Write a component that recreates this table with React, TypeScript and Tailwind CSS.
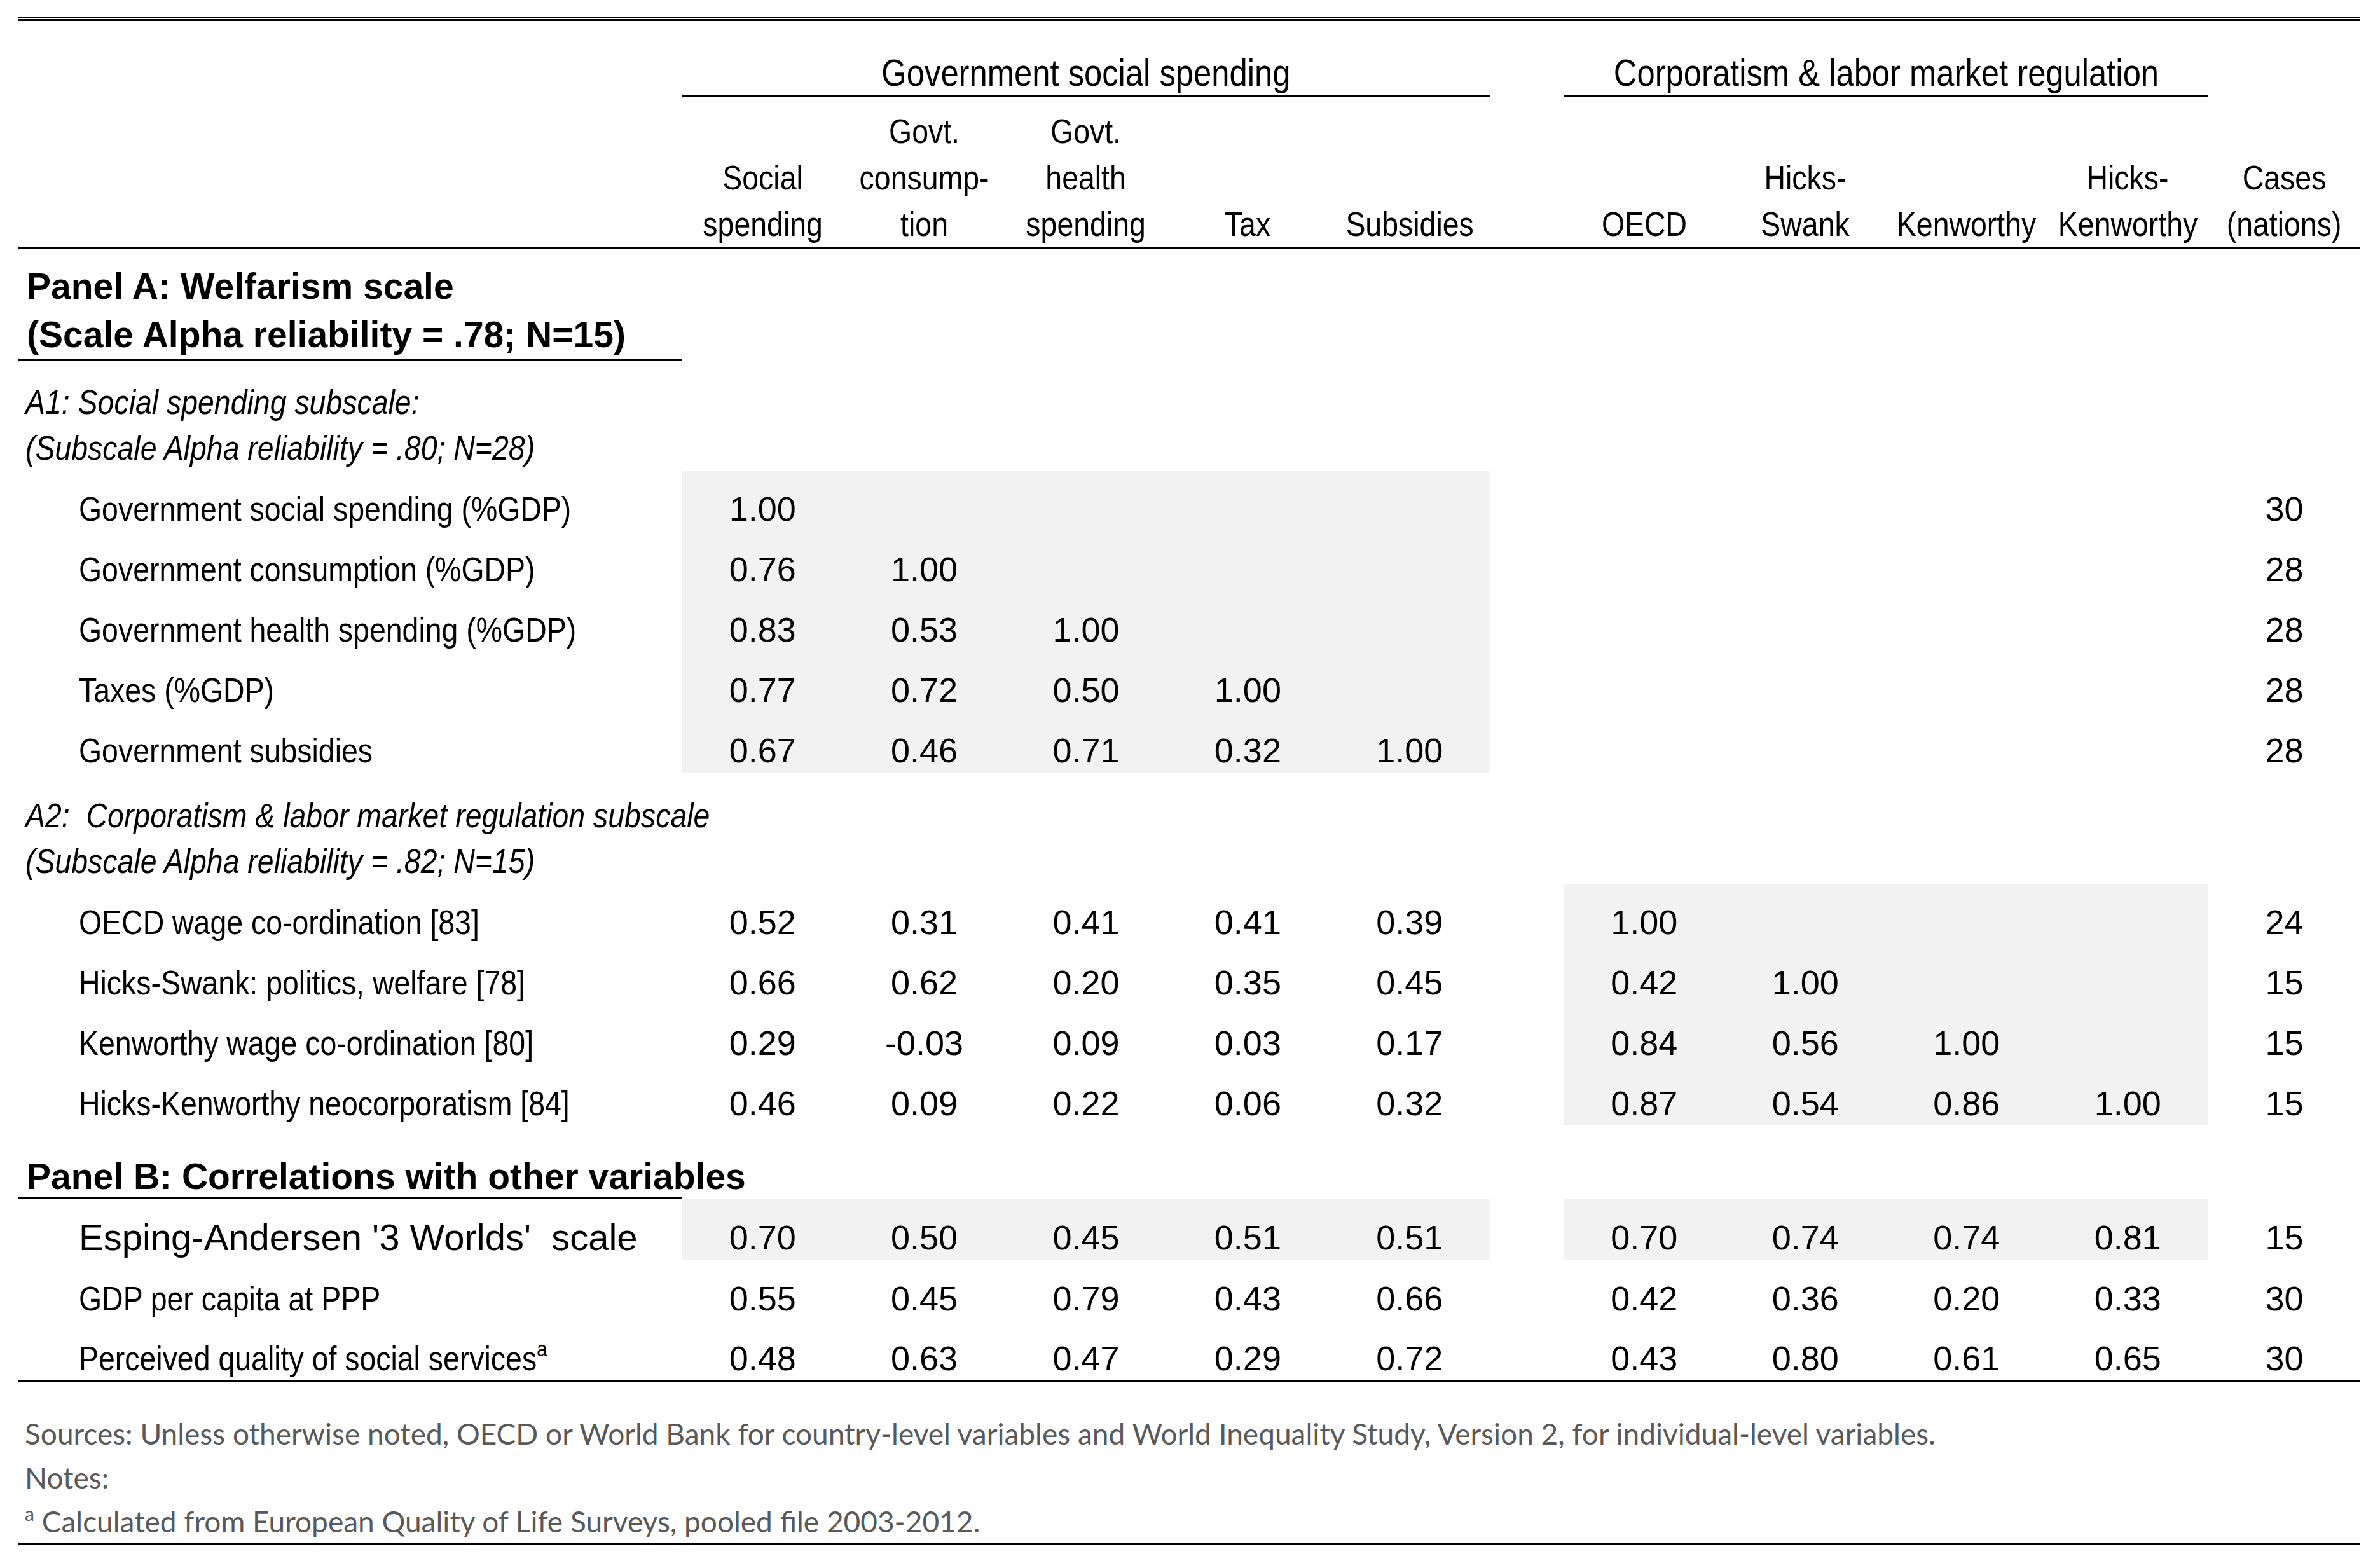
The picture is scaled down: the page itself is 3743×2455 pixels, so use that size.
import React from "react";

// 12 columns: label | 5 spending | gap | 4 corporatism | cases
const GRID =
  "grid grid-cols-[1044px_repeat(5,254.4px)_115px_repeat(4,253.5px)_239px]";

const SHADE = "bg-[#f2f2f2]";

type Row = {
  label: React.ReactNode;
  gov: string[];
  corp: string[];
  n: string;
  shadeGov?: boolean;
  shadeCorp?: boolean;
  big?: boolean;
};

const Narrow = ({
  children,
  className = "",
}: {
  children: React.ReactNode;
  className?: string;
}) => (
  <span className={`inline-block whitespace-pre scale-x-[0.86] ${className}`}>
    {children}
  </span>
);

const blank4 = ["", "", "", ""];

const a1: Row[] = [
  { label: "Government social spending (%GDP)", gov: ["1.00", "", "", "", ""], corp: blank4, n: "30", shadeGov: true },
  { label: "Government consumption (%GDP)", gov: ["0.76", "1.00", "", "", ""], corp: blank4, n: "28", shadeGov: true },
  { label: "Government health spending (%GDP)", gov: ["0.83", "0.53", "1.00", "", ""], corp: blank4, n: "28", shadeGov: true },
  { label: "Taxes (%GDP)", gov: ["0.77", "0.72", "0.50", "1.00", ""], corp: blank4, n: "28", shadeGov: true },
  { label: "Government subsidies", gov: ["0.67", "0.46", "0.71", "0.32", "1.00"], corp: blank4, n: "28", shadeGov: true },
];

const a2: Row[] = [
  { label: "OECD wage co-ordination [83]", gov: ["0.52", "0.31", "0.41", "0.41", "0.39"], corp: ["1.00", "", "", ""], n: "24", shadeCorp: true },
  { label: "Hicks-Swank: politics, welfare [78]", gov: ["0.66", "0.62", "0.20", "0.35", "0.45"], corp: ["0.42", "1.00", "", ""], n: "15", shadeCorp: true },
  { label: "Kenworthy wage co-ordination [80]", gov: ["0.29", "-0.03", "0.09", "0.03", "0.17"], corp: ["0.84", "0.56", "1.00", ""], n: "15", shadeCorp: true },
  { label: "Hicks-Kenworthy neocorporatism [84]", gov: ["0.46", "0.09", "0.22", "0.06", "0.32"], corp: ["0.87", "0.54", "0.86", "1.00"], n: "15", shadeCorp: true },
];

const DataRow = ({ row, h = "h-[95px]", last = false }: { row: Row; h?: string; last?: boolean }) => (
  <div className={`${GRID} ${h} ${last ? "border-b-[3px] border-black" : ""}`}>
    <div className="flex items-center pt-[24px] pl-[96px] whitespace-nowrap">
      {row.big ? (
        <span className="whitespace-pre text-[58px]">{row.label}</span>
      ) : (
        <Narrow className="origin-left">{row.label}</Narrow>
      )}
    </div>
    {row.gov.map((v, i) => (
      <div
        key={"g" + i}
        className={`flex items-center justify-center pt-[24px] ${row.shadeGov ? SHADE : ""}`}
      >
        {v}
      </div>
    ))}
    <div />
    {row.corp.map((v, i) => (
      <div
        key={"c" + i}
        className={`flex items-center justify-center pt-[24px] ${row.shadeCorp ? SHADE : ""}`}
      >
        {v}
      </div>
    ))}
    <div className="flex items-center justify-center pt-[24px]">{row.n}</div>
  </div>
);

const HeadCell = ({ lines }: { lines: string[] }) => (
  <div className="flex flex-col items-center justify-end">
    {lines.map((l) => (
      <div key={l} className="leading-[73px]">
        <Narrow className="origin-center">{l}</Narrow>
      </div>
    ))}
  </div>
);

export default function App() {
  return (
    <div className="w-[3743px] h-[2455px] bg-white text-black font-['Liberation_Sans',Arial,sans-serif] text-[54px] leading-none">
      <div className="ml-[28px] w-[3684px] pt-[26px]">
        {/* top double rule */}
        <div className="h-[2px] bg-black" />
        <div className="mt-[2px] h-[3px] bg-black" />

        {/* group headers */}
        <div className={GRID}>
          <div />
          <div className="col-span-5 h-[120px] border-b-[3px] border-black flex items-end justify-center">
            <div className="leading-[70px] text-[59px]">
              <Narrow className="origin-center">Government social spending</Narrow>
            </div>
          </div>
          <div />
          <div className="col-span-4 h-[120px] border-b-[3px] border-black flex items-end justify-center">
            <div className="leading-[70px] text-[59px]">
              <Narrow className="origin-center">Corporatism &amp; labor market regulation</Narrow>
            </div>
          </div>
          <div />
        </div>

        {/* column headers */}
        <div className={`${GRID} h-[239px] border-b-[3px] border-black`}>
          <div />
          <HeadCell lines={["Social", "spending"]} />
          <HeadCell lines={["Govt.", "consump-", "tion"]} />
          <HeadCell lines={["Govt.", "health", "spending"]} />
          <HeadCell lines={["Tax"]} />
          <HeadCell lines={["Subsidies"]} />
          <div />
          <HeadCell lines={["OECD"]} />
          <HeadCell lines={["Hicks-", "Swank"]} />
          <HeadCell lines={["Kenworthy"]} />
          <HeadCell lines={["Hicks-", "Kenworthy"]} />
          <HeadCell lines={["Cases", "(nations)"]} />
        </div>

        {/* Panel A */}
        <div className="w-[1044px] pt-[20px] pl-[14px] border-b-[3px] border-black font-bold text-[57px] leading-[76px] whitespace-nowrap">
          <div>Panel A: Welfarism scale</div>
          <div>(Scale Alpha reliability = .78; N=15)</div>
        </div>

        <div className="pt-[29px] pl-[12px] italic leading-[72px] whitespace-nowrap">
          <div>
            <Narrow className="origin-left">A1: Social spending subscale:</Narrow>
          </div>
          <div>
            <Narrow className="origin-left">(Subscale Alpha reliability = .80; N=28)</Narrow>
          </div>
        </div>

        {a1.map((r, i) => (
          <DataRow key={i} row={r} />
        ))}

        <div className="pt-[31px] pl-[12px] italic leading-[72px] whitespace-nowrap">
          <div>
            <Narrow className="origin-left">A2:  Corporatism &amp; labor market regulation subscale</Narrow>
          </div>
          <div>
            <Narrow className="origin-left">(Subscale Alpha reliability = .82; N=15)</Narrow>
          </div>
        </div>

        {a2.map((r, i) => (
          <DataRow key={i} row={r} />
        ))}

        {/* Panel B */}
        <div className="w-[1044px] pt-[48px] pl-[14px] border-b-[3px] border-black font-bold text-[57px] leading-[64px] whitespace-nowrap">
          Panel B: Correlations with other variables
        </div>

        <DataRow
          h="h-[97px]"
          row={{
            label: "Esping-Andersen '3 Worlds'  scale",
            gov: ["0.70", "0.50", "0.45", "0.51", "0.51"],
            corp: ["0.70", "0.74", "0.74", "0.81"],
            n: "15",
            shadeGov: true,
            shadeCorp: true,
            big: true,
          }}
        />
        <DataRow
          row={{
            label: "GDP per capita at PPP",
            gov: ["0.55", "0.45", "0.79", "0.43", "0.66"],
            corp: ["0.42", "0.36", "0.20", "0.33"],
            n: "30",
          }}
        />
        <DataRow
          h="h-[96px]"
          last
          row={{
            label: (
              <>
                Perceived quality of social services
                <sup className="text-[34px] -top-[22px]">a</sup>
              </>
            ),
            gov: ["0.48", "0.63", "0.47", "0.29", "0.72"],
            corp: ["0.43", "0.80", "0.61", "0.65"],
            n: "30",
          }}
        />

        {/* notes */}
        <div className="pt-[47px] pl-[11px] border-b-[3px] border-black font-['Lato',sans-serif] text-[46px] leading-[69px] text-[#595959] whitespace-nowrap">
          <div>
            Sources: Unless otherwise noted, OECD or World Bank for country-level variables and World Inequality
            Study, Version 2, for individual-level variables.
          </div>
          <div>Notes:</div>
          <div>
            <sup className="text-[30px] -top-[18px]">a</sup> Calculated from European Quality of Life Surveys,
            pooled file 2003-2012.
          </div>
        </div>
      </div>
    </div>
  );
}
